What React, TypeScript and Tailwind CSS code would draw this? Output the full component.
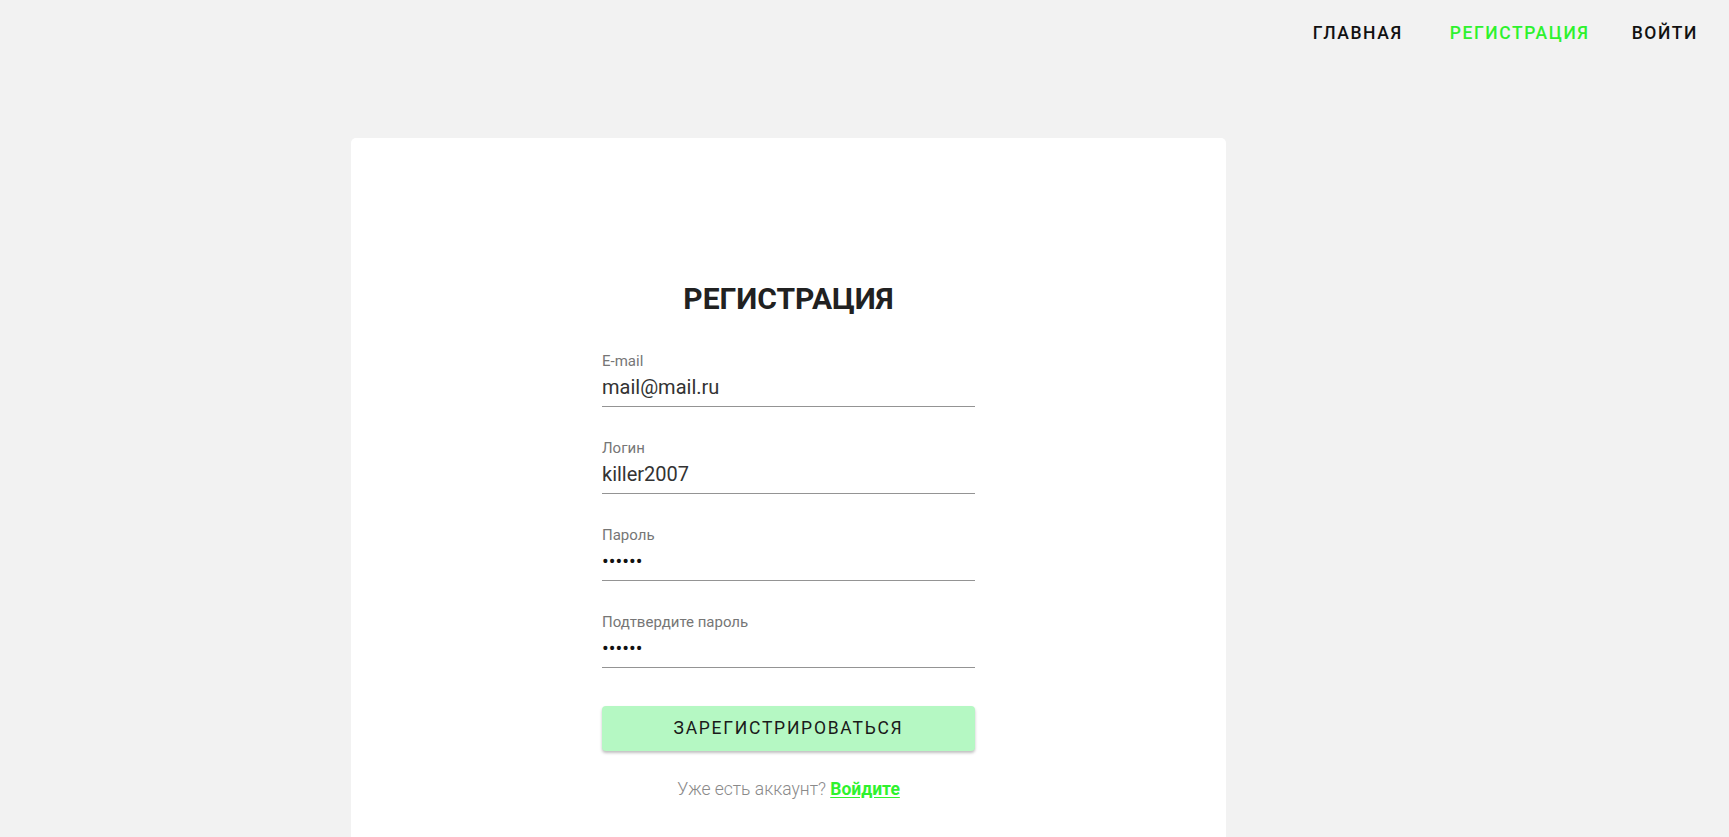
import React from "react";

const Field = ({ label, value, password }: { label: string; value: string; password?: boolean }) => (
  <div className="flex flex-col">
    <span className="text-[15px] leading-[15px] text-[#767676]">{label}</span>
    <div className="mt-[8px] pb-[9px] border-b border-[#949494]">
      <span className={`block text-[20px] leading-[20px] ${password ? "text-[#111]" : "text-[#333]"}`}>{value}</span>
    </div>
  </div>
);

export default function App() {
  return (
    <div className="min-h-[837px] bg-[#f2f2f2] overflow-hidden" style={{ fontFamily: "Roboto, 'Noto Sans', sans-serif" }}>
      <header className="h-[67px] flex items-center justify-end pr-[31px]">
        <nav className="flex items-center text-[17.5px] leading-[17.5px] tracking-[0.09em] font-medium uppercase">
          <a className="text-[#111]">Главная</a>
          <a className="ml-[47px] text-[#2ef22e]">Регистрация</a>
          <a className="ml-[42px] text-[#111]">Войти</a>
        </nav>
      </header>
      <main className="mt-[71px] ml-[351px] w-[875px] h-[760px] bg-white rounded-[5px] flex flex-col items-center pt-[146px]">
        <h1 className="text-[30px] leading-[30px] font-bold text-[#212121]">РЕГИСТРАЦИЯ</h1>
        <form className="w-[373px] mt-[40px] flex flex-col gap-[34px]">
          <Field label="E-mail" value="mail@mail.ru" />
          <Field label="Логин" value="killer2007" />
          <Field label="Пароль" value="••••••" password />
          <Field label="Подтвердите пароль" value="••••••" password />
        </form>
        <button className="mt-[38px] w-[373px] h-[45px] rounded-[4px] bg-[#b5f8c3] text-[17.5px] tracking-[0.1em] text-[#1a1a1a] shadow-[0_2px_3px_rgba(0,0,0,0.25)]">
          ЗАРЕГИСТРИРОВАТЬСЯ
        </button>
        <p className="mt-[28px] text-[17.5px] leading-[20px] font-light text-[#8a8a8a]">
          Уже есть аккаунт?{" "}
          <a className="font-bold text-[#2ef22e] underline underline-offset-[2px]">Войдите</a>
        </p>
      </main>
    </div>
  );
}
